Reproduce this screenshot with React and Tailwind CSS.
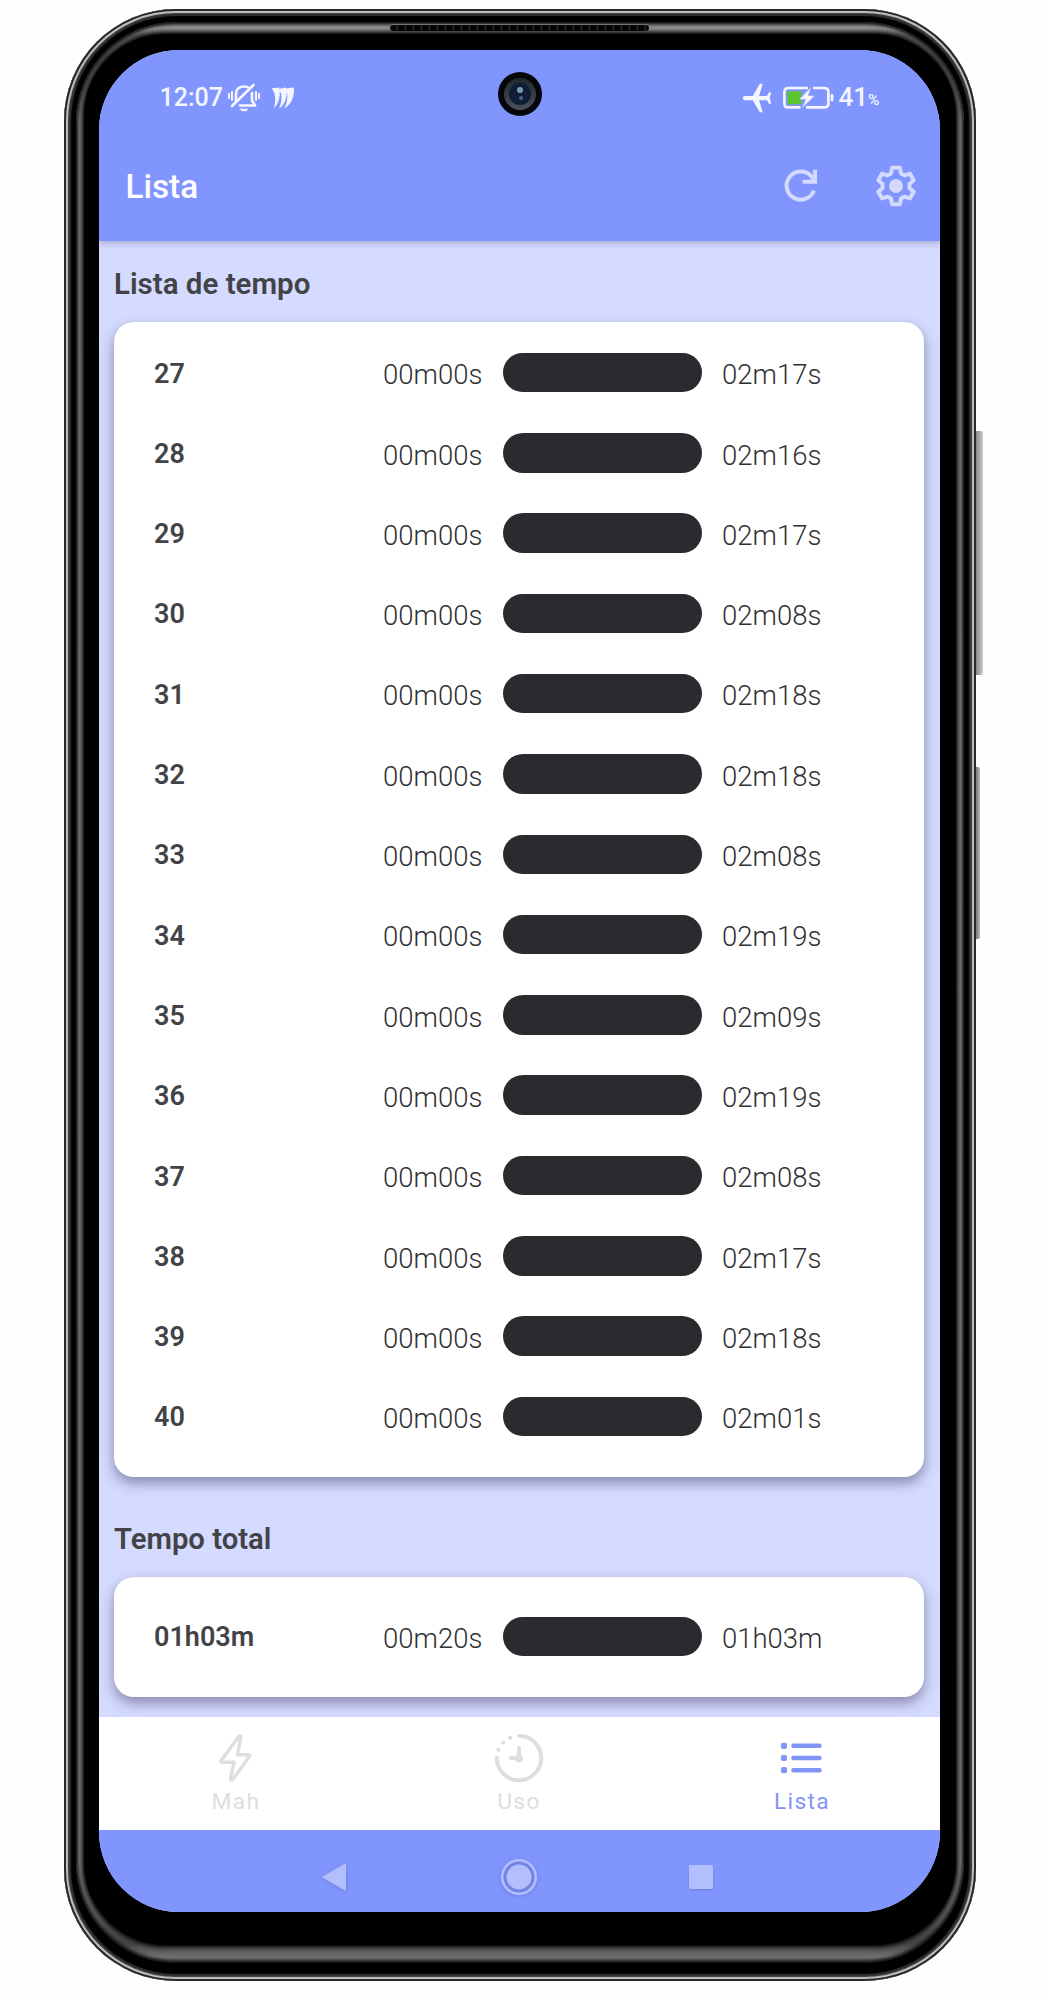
import React from "react";
import { MdAirplanemodeActive } from "react-icons/md";

const rows = [
  [27, "02m17s"], [28, "02m16s"], [29, "02m17s"], [30, "02m08s"], [31, "02m18s"],
  [32, "02m18s"], [33, "02m08s"], [34, "02m19s"], [35, "02m09s"], [36, "02m19s"],
  [37, "02m08s"], [38, "02m17s"], [39, "02m18s"], [40, "02m01s"],
];

// Outline of a six-toothed gear centred on (24, 24).
const gearPoints = [0, 1, 2, 3, 4, 5]
  .flatMap((k) => {
    const a = (k * Math.PI) / 3;
    return [[-5, -12.6], [-3.9, -18.2], [3.9, -18.2], [5, -12.6]].map(([x, y]) => {
      const px = 24 + x * Math.cos(a) - y * Math.sin(a);
      const py = 24 + x * Math.sin(a) + y * Math.cos(a);
      return px.toFixed(2) + "," + py.toFixed(2);
    });
  })
  .join(" ");

function BellOff() {
  return (
    <svg width="34" height="30" viewBox="0 0 34 30" fill="none" stroke="currentColor" strokeWidth="2.7" strokeLinecap="round" className="shrink-0">
      <path d="M9 18.5 V11 C9 6 12 3.5 17 3.5 C19 3.5 20.8 4.1 22 5" />
      <path d="M25 10 V17.5 L28 22.5 H13" strokeLinejoin="round" />
      <path d="M26.5 2 L5 23" />
      <path d="M13.5 26.2 H20.5 C20 28.4 14 28.4 13.5 26.2Z" fill="currentColor" strokeWidth="1" />
      <path d="M5 9 V17 M2 11 V15 M29 9 V17 M32 11 V15" strokeWidth="2" />
    </svg>
  );
}

function Strokes() {
  return (
    <svg width="24" height="24" viewBox="0 0 24 24" fill="currentColor" className="shrink-0">
      <path d="M0.8 2.2 L8 1.4 C9.8 8 8.8 16 2.8 22.5 C4.6 17 4.6 12 3.6 7.5 Z" />
      <path d="M6.6 3 L15 1.4 C16.8 8 15.4 17 8.2 22.5 C10.4 17 10.8 12 10.2 7.5 Z" />
      <path d="M13 3 L22.8 1.2 C23.6 9 21.6 17.5 13.3 22.5 C16.2 17 16.6 12 16.2 7.5 Z" />
    </svg>
  );
}

function Battery() {
  return (
    <svg width="52" height="26" viewBox="0 0 52 26" fill="none" className="shrink-0">
      <rect x="5.5" y="6.3" width="14" height="13" fill="#5ac52c" />
      <path d="M26 3 H6.5 Q2.4 3 2.4 7 V18.4 Q2.4 22.4 6.5 22.4 H18.5" stroke="currentColor" strokeWidth="2.7" />
      <path d="M31 3 H42 Q46.4 3 46.4 7 V18.4 Q46.4 22.4 42 22.4 H24" stroke="currentColor" strokeWidth="2.7" />
      <path d="M29.5 1.5 L17 14.6 H23.5 L19.5 23.8 L33 10.6 H26.4 Z" fill="currentColor" stroke="#8195ff" strokeWidth="0.6" />
      <path d="M50 10.4 V15" stroke="currentColor" strokeWidth="2.8" strokeLinecap="round" />
    </svg>
  );
}

function Refresh() {
  return (
    <svg width="36" height="36" viewBox="0 0 36 36" fill="none" stroke="currentColor" strokeWidth="4">
      <path d="M30.9 22.6 A14.1 14.1 0 1 1 28.2 8.2 L31.5 12" />
      <path d="M32.1 1.8 V13.8 H19.5" />
    </svg>
  );
}

function Gear() {
  return (
    <svg width="48" height="48" viewBox="0 0 48 48">
      <polygon points={gearPoints} fill="none" stroke="currentColor" strokeWidth="4" strokeLinejoin="round" />
      <circle cx="24" cy="24" r="7" fill="currentColor" />
    </svg>
  );
}

function BoltIcon() {
  return (
    <svg width="48" height="50" viewBox="0 0 48 50" fill="none" stroke="currentColor" strokeWidth="3.4" strokeLinejoin="round">
      <path d="M27.2 3 L8.8 28 Q8.2 29.2 9.6 29.2 H22.2 L18.4 46 Q19.2 48 20.7 46.5 L37.4 23.5 Q38.2 21.8 36.4 21.8 H25.5 L28.8 4 Q28.5 2 27.2 3 Z" />
    </svg>
  );
}

function ClockIcon() {
  return (
    <svg width="50" height="50" viewBox="0 0 50 50" fill="none" stroke="currentColor" strokeWidth="4" strokeLinecap="round">
      <path d="M25 2.8 A22.2 22.2 0 1 1 2.8 25" />
      <path d="M25 14.8 V25 H16.8" />
      <circle cx="25" cy="25.5" r="2" />
      <g fill="currentColor" stroke="none">
        <circle cx="16.3" cy="4.8" r="2.1" />
        <circle cx="9.2" cy="9.5" r="2.1" />
        <circle cx="4.3" cy="16.8" r="2.1" />
      </g>
    </svg>
  );
}

function ListIcon() {
  return (
    <svg width="42" height="50" viewBox="0 0 42 50" fill="currentColor">
      {[12.8, 25, 37.2].map((y) => (
        <g key={y}>
          <rect x="0" y={y - 3.1} width="6" height="6.2" rx="1.8" />
          <rect x="10.2" y={y - 2.2} width="30.5" height="4.4" rx="2.2" />
        </g>
      ))}
    </svg>
  );
}

function TimeRow({ label, start, end }) {
  return (
    <div className="grid h-[80.3px] grid-cols-[229px_120px_199px_1fr] items-center pl-10 text-[27.5px] leading-none">
      <span className="mt-[3px] text-[27px] font-semibold">{label}</span>
      <span className="mt-[5px] font-light text-[#303032]">{start}</span>
      <span className="h-[39.5px] w-[199px] rounded-full bg-[#2a2b2f]" />
      <span className="mt-[5px] pl-5 font-light text-[#303032]">{end}</span>
    </div>
  );
}

function NavItem({ icon, label, active }) {
  return (
    <div className={"flex flex-col items-center pt-[16px] " + (active ? "text-[#8195f5]" : "text-[#dedede]")}>
      {icon}
      <span className="mt-[6px] text-[22.8px] leading-[26px] tracking-[1.3px]">{label}</span>
    </div>
  );
}

const cardClass = "rounded-[20px] bg-white shadow-[0_6px_13px_rgba(60,55,90,0.5)]";

export default function App() {
  return (
    <div className="flex h-[2000px] w-[1045px] items-start bg-[#fefefe] pl-16 pt-[9px] font-['Roboto',sans-serif] text-[#424347]">
      <div className="relative h-[1972px] w-[912px] rounded-[112px] bg-black px-[12px] pt-[13px] pb-[18px] shadow-[inset_0_0_0_2px_#292929,inset_0_0_1px_4px_#c5c5c5,inset_0_0_1px_7px_#303030]">
        <div className="absolute top-[422px] -right-[7px] h-[244px] w-[7px] rounded-r-[2px] bg-gradient-to-r from-[#858585] via-[#aaa9ac] to-[#cfcfcf]" />
        <div className="absolute top-[758px] -right-[4px] h-[172px] w-[4px] rounded-r-[2px] bg-gradient-to-r from-[#777] to-[#bbb]" />
        <div className="h-full rounded-[100px] bg-[linear-gradient(to_bottom,#606060_0,#929292_6px,#606060_14px,#858585_100px,#8c8c8c_50%,#858585_calc(100%_-_100px),#424242_calc(100%_-_20px),#707070_calc(100%_-_6px),#404040_100%)] px-[8px] pt-[12px] pb-[18px] shadow-[inset_0_0_3px_2px_#111]">
          <div className="flex h-full justify-center rounded-[82px] bg-black pt-[16px] pr-[2px] shadow-[0_0_4px_2px_#000]">
            <div className="relative flex h-[1862px] w-[841px] shrink-0 flex-col overflow-hidden rounded-[80px] bg-[#d5daff]">
              <div className="absolute top-[22px] left-[399px] z-20 flex size-[44px] items-center justify-center rounded-full bg-[#050607]">
                <div className="flex size-[32px] items-center justify-center rounded-full bg-gradient-to-b from-[#20292e] to-[#49505a]">
                  <div className="flex size-[22px] items-center justify-center rounded-full bg-[#101d37]">
                    <div className="-mt-2 size-[6px] rounded-full bg-[#7896b5]" />
                    <div className="-ml-1 mt-2 size-[4px] rounded-full bg-[#49658b]" />
                  </div>
                </div>
              </div>

              <header className="z-10 h-[191px] shrink-0 bg-[#8195ff] shadow-[0_2px_6px_rgba(80,75,130,0.35)]">
                <div className="flex h-[94px] items-center pt-px text-[25px] font-medium text-[#f4f5ff]">
                  <span className="ml-[61px]">12:07</span>
                  <span className="ml-[4px]"><BellOff /></span>
                  <span className="ml-[10px]"><Strokes /></span>
                  <span className="ml-auto -rotate-90"><MdAirplanemodeActive size={34} /></span>
                  <span className="ml-[8px]"><Battery /></span>
                  <span className="ml-[5px] text-[26px]">41</span>
                  <span className="mt-[7px] mr-[60px] text-[15.5px]">%</span>
                </div>
                <div className="flex h-[84px] items-center text-[#d4dafe]">
                  <h1 className="mt-px ml-[27px] text-[33.3px] font-medium text-white">Lista</h1>
                  <span className="ml-auto"><Refresh /></span>
                  <span className="mr-[20px] ml-[53px]"><Gear /></span>
                </div>
              </header>

              <main className="flex h-[1476px] shrink-0 flex-col px-[15.5px]">
                <h2 className="mt-[24px] h-[57px] text-[29.5px] leading-[38px] font-semibold">Lista de tempo</h2>
                <section className={cardClass + " h-[1154.5px] shrink-0 pt-[10.4px]"}>
                  {rows.map(([n, end]) => <TimeRow key={n} label={n} start="00m00s" end={end} />)}
                </section>
                <h2 className="mt-[43px] h-[57px] shrink-0 text-[29.3px] leading-[38px] font-semibold">Tempo total</h2>
                <section className={cardClass + " flex h-[120px] shrink-0 flex-col justify-center"}>
                  <TimeRow label="01h03m" start="00m20s" end="01h03m" />
                </section>
              </main>

              <nav className="z-10 grid h-[112.5px] shrink-0 grid-cols-[283px_283px_283px] justify-center bg-white">
                <NavItem icon={<BoltIcon />} label="Mah" />
                <NavItem icon={<ClockIcon />} label="Uso" />
                <NavItem icon={<ListIcon />} label="Lista" active />
              </nav>

              <div className="z-10 flex h-[83px] shrink-0 items-center bg-[#8195ff] pt-[12px] text-[#b3befd]">
                <svg width="26" height="30" viewBox="0 0 26 30" className="ml-[222px] drop-shadow-sm">
                  <path d="M2.5 15 L24 2.5 V27.5 Z" fill="currentColor" stroke="currentColor" strokeWidth="2" strokeLinejoin="round" />
                </svg>
                <svg width="38" height="38" viewBox="0 0 38 38" className="ml-[153px] drop-shadow-sm">
                  <circle cx="19" cy="19" r="15" fill="none" stroke="#7285e6" strokeWidth="3" />
                  <circle cx="19" cy="19" r="16.8" fill="none" stroke="currentColor" strokeWidth="2.6" />
                  <circle cx="19" cy="19" r="12.5" fill="currentColor" />
                </svg>
                <span className="ml-[151px] size-[24px] rounded-[1px] bg-[#b3befd] shadow-sm" />
              </div>
            </div>
          </div>
        </div>
        <div className="absolute top-[15px] left-[326px] h-[7px] w-[259px] rounded-full border-t border-[#777] bg-[repeating-linear-gradient(90deg,#050505_0,#050505_6px,#303030_8px)]" />
      </div>
    </div>
  );
}
